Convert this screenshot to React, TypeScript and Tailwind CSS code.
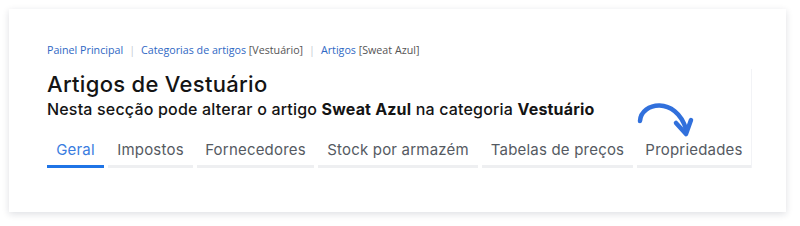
import React from "react";

const TABS = [
  { label: "Geral", w: "w-[57px]" },
  { label: "Impostos", w: "w-[85px]" },
  { label: "Fornecedores", w: "w-[117px]" },
  { label: "Stock por armazém", w: "w-[160px]" },
  { label: "Tabelas de preços", w: "w-[151px]" },
  { label: "Propriedades", w: "w-[114px]" },
];

function Crumb({ link, extra }: { link: string; extra?: string }) {
  return (
    <span>
      <span className="text-[#2f68c4]">{link}</span>
      {extra && <span className="text-[#555]">{extra}</span>}
    </span>
  );
}

export default function App() {
  return (
    <div className="w-[800px] h-[226px] bg-white pt-[9px] pl-[9px]">
      <div className="relative w-[777px] h-[203px] bg-white shadow-[0_2px_7px_rgba(20,30,60,0.14)] pl-[38px] pt-[33px]">
        <div className="flex items-center text-[10.7px] leading-[16px] font-['Open_Sans',sans-serif]">
          <Crumb link="Painel Principal" />
          <span className="mx-[6px] text-[#c4cad3]">|</span>
          <Crumb link="Categorias de artigos" extra=" [Vestuário]" />
          <span className="mx-[6px] text-[#c4cad3]">|</span>
          <Crumb link="Artigos" extra=" [Sweat Azul]" />
        </div>
        <div className="w-[705px] mt-[11px] font-['Inter',sans-serif] border-r border-[#f2f3f6]">
          <h1 className="text-[22px] leading-[30px] font-medium tracking-[0.3px] text-[#141414]">Artigos de Vestuário</h1>
          <p className="text-[16px] leading-[20px] font-medium tracking-[0.18px] text-[#141414]">
            Nesta secção pode alterar o artigo <b className="font-bold">Sweat Azul</b> na categoria <b className="font-bold">Vestuário</b>
          </p>
          <div className="flex gap-[4px] mt-[21px]">
            {TABS.map((t, i) => (
              <div
                key={t.label}
                className={`${t.w} shrink-0 whitespace-nowrap text-center pb-[5px] text-[15px] leading-[20px] tracking-[0.2px] border-b-[3px] ${
                  i === 0 ? "text-[#3a7ce0] border-[#1f74e6]" : "text-[#555a62] border-[#eeeff1]"
                }`}
              >
                {t.label}
              </div>
            ))}
          </div>
        </div>
        <svg className="absolute left-[627px] top-[88px]" width="62" height="46" viewBox="0 0 62 46" fill="none">
          <path d="M4 24 C5 5 40 -1 50 32" stroke="#3170dc" strokeWidth="4.5" strokeLinecap="round" fill="none" />
          <path d="M40 26 L50 37 L55 23" stroke="#3170dc" strokeWidth="4.5" strokeLinecap="round" strokeLinejoin="round" fill="none" />
        </svg>
      </div>
    </div>
  );
}
